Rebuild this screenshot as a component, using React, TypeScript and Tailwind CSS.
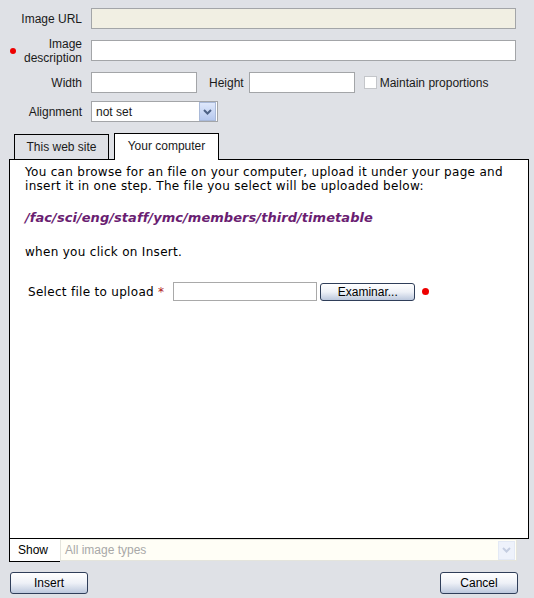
import React from "react";

const Arrow = ({ disabled }: { disabled?: boolean }) => (
  <div
    className={
      disabled
        ? "w-[17px] h-[19px] border border-[#e3e9f5] bg-[#eef2fb] flex items-center justify-center"
        : "w-[17px] h-[19px] border border-[#a9b9d8] bg-gradient-to-b from-[#dfe8fb] to-[#b6c8ee] flex items-center justify-center"
    }
  >
    <svg width="9" height="6" viewBox="0 0 9 6">
      <path
        d="M1 1 L4.5 4.5 L8 1"
        fill="none"
        stroke={disabled ? "#c4cde0" : "#4d6185"}
        strokeWidth="2"
      />
    </svg>
  </div>
);

const Btn = ({ label, w, h }: { label: string; w: string; h: string }) => (
  <div
    className={`${w} ${h} border border-[#2f3e59] rounded-[3px] bg-gradient-to-b from-[#ffffff] via-[#eef1f7] to-[#bcc8dd] flex items-center justify-center text-[12px] text-black`}
  >
    {label}
  </div>
);

export default function App() {
  return (
    <div
      className="w-[534px] h-[598px] bg-[#dfe1e6] flex flex-col text-[12px] text-[#1a1a1a]"
      style={{ fontFamily: '"Liberation Sans", Arial, sans-serif' }}
    >
      {/* Image URL */}
      <div className="flex items-center mt-[8px] h-[21px]">
        <div className="w-[82px] text-right">Image URL</div>
        <div className="ml-[9px] w-[425px] h-[21px] border border-[#a3a5a8] bg-[#f1efe3]" />
      </div>
      {/* Image description */}
      <div className="flex items-center mt-[11px] h-[21px]">
        <div className="w-[82px] flex items-center">
          <div className="ml-[10px] w-[6px] h-[6px] rounded-full bg-[#ee0000]" />
          <div className="flex-1 text-right leading-[14px]">
            Image
            <br />
            description
          </div>
        </div>
        <div className="ml-[9px] w-[425px] h-[21px] border border-[#a3a5a8] bg-white" />
      </div>
      {/* Width / Height */}
      <div className="flex items-center mt-[11px] h-[21px]">
        <div className="w-[82px] text-right">Width</div>
        <div className="ml-[9px] w-[106px] h-[21px] border border-[#a3a5a8] bg-white" />
        <div className="ml-[12px]">Height</div>
        <div className="ml-[5px] w-[106px] h-[21px] border border-[#a3a5a8] bg-white" />
        <div className="ml-[9px] w-[13px] h-[13px] border border-[#c4c6ca] bg-white" />
        <div className="ml-[3px]">Maintain proportions</div>
      </div>
      {/* Alignment */}
      <div className="flex items-center mt-[8px] h-[21px]">
        <div className="w-[82px] text-right">Alignment</div>
        <div className="ml-[9px] w-[127px] h-[21px] border border-[#a3a5a8] bg-white flex items-center justify-between pl-[4px] pr-px">
          <span>not set</span>
          <Arrow />
        </div>
      </div>

      {/* Tabs */}
      <div className="flex items-end mt-[10px] ml-[14px] h-[27px] relative z-10">
        <div className="w-[95px] h-[25px] border border-b-0 border-black bg-[#dfe1e6] flex items-center justify-center">
          This web site
        </div>
        <div className="ml-[5px] w-[105px] h-[27px] border border-b-0 border-black bg-white flex items-center justify-center -mb-px pb-[2px]">
          Your computer
        </div>
      </div>

      {/* Panel */}
      <div
        className="ml-[9px] w-[520px] h-[380px] border border-black bg-white text-[12px] text-black"
        style={{ fontFamily: '"DejaVu Sans", Verdana, sans-serif' }}
      >
        <div className="pl-[15px] pt-[5px] leading-[14px] tracking-[0.3px]">
          You can browse for an file on your computer, upload it under your page and
          <br />
          insert it in one step. The file you select will be uploaded below:
        </div>
        <div className="pl-[15px] mt-[18px] font-bold italic text-[13px] text-[#6a1e72] tracking-[0.05px] leading-[14px]">
          /fac/sci/eng/staff/ymc/members/third/timetable
        </div>
        <div className="pl-[15px] mt-[20px] leading-[14px] tracking-[0.3px]">when you click on Insert.</div>
        <div className="flex items-center pl-[18px] mt-[23px] h-[19px] tracking-[0.3px]">
          <span>Select file to upload</span>
          <span className="ml-[4px] text-[#b02020]">*</span>
          <div className="ml-[9px] w-[144px] h-[19px] border border-[#a9a9a9] bg-white" />
          <div className="ml-[3px] tracking-normal" style={{ fontFamily: '"Liberation Sans", Arial, sans-serif' }}>
            <Btn label="Examinar..." w="w-[95px]" h="h-[18px]" />
          </div>
          <div className="ml-[7px] w-[7px] h-[7px] rounded-full bg-[#ee0000]" />
        </div>
      </div>

      {/* Show row */}
      <div className="flex ml-[9px] h-[23px]">
        <div className="w-[51px] h-[23px] border-l border-b border-black bg-white flex items-center pl-[8px] text-[12px] text-black">
          Show
        </div>
        <div className="w-[457px] h-[22px] border border-[#e4e4dc] bg-[#fffef6] flex items-center justify-between pl-[4px] pr-px text-[#a8a8a8]">
          <span>All image types</span>
          <Arrow disabled />
        </div>
      </div>

      {/* Buttons */}
      <div className="flex justify-between ml-[10px] w-[508px] mt-[10px]">
        <Btn label="Insert" w="w-[78px]" h="h-[22px]" />
        <Btn label="Cancel" w="w-[78px]" h="h-[22px]" />
      </div>
    </div>
  );
}
